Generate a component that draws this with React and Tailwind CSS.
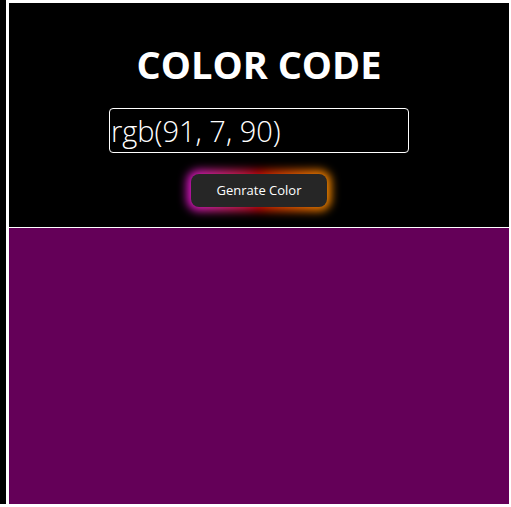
export default function App() {
  return (
    <div className="flex h-[507px] w-[511px] bg-white" style={{ fontFamily: '"Open Sans", "Noto Sans", sans-serif' }}>
      <div className="h-[504px] w-[6px] bg-black" />
      <div className="ml-[3px] mt-[3px] flex h-[501px] w-[500px] flex-col">
        <header className="flex h-[224px] flex-col items-center bg-black">
          <h1 className="mt-[39px] text-[38px] font-bold leading-[44px] text-white">COLOR CODE</h1>
          <input
            className="mt-[22px] h-[45px] w-[300px] rounded-[4px] border border-white bg-transparent px-[1px] text-[29px] font-light text-white outline-none"
            defaultValue="rgb(91, 7, 90)"
          />
          <div className="relative mt-[21px]">
            <div className="absolute -inset-[4px] rounded-[12px] bg-linear-to-r from-[#e010d0] via-[#d00000] to-[#ff9000] blur-[5px]" />
            <button className="relative h-[33px] w-[136px] rounded-[8px] bg-[#262626] text-[13px] text-white">
              Genrate Color
            </button>
          </div>
        </header>
        <div className="h-px bg-white" />
        <div className="flex-1 bg-[#640058]" />
      </div>
    </div>
  );
}
